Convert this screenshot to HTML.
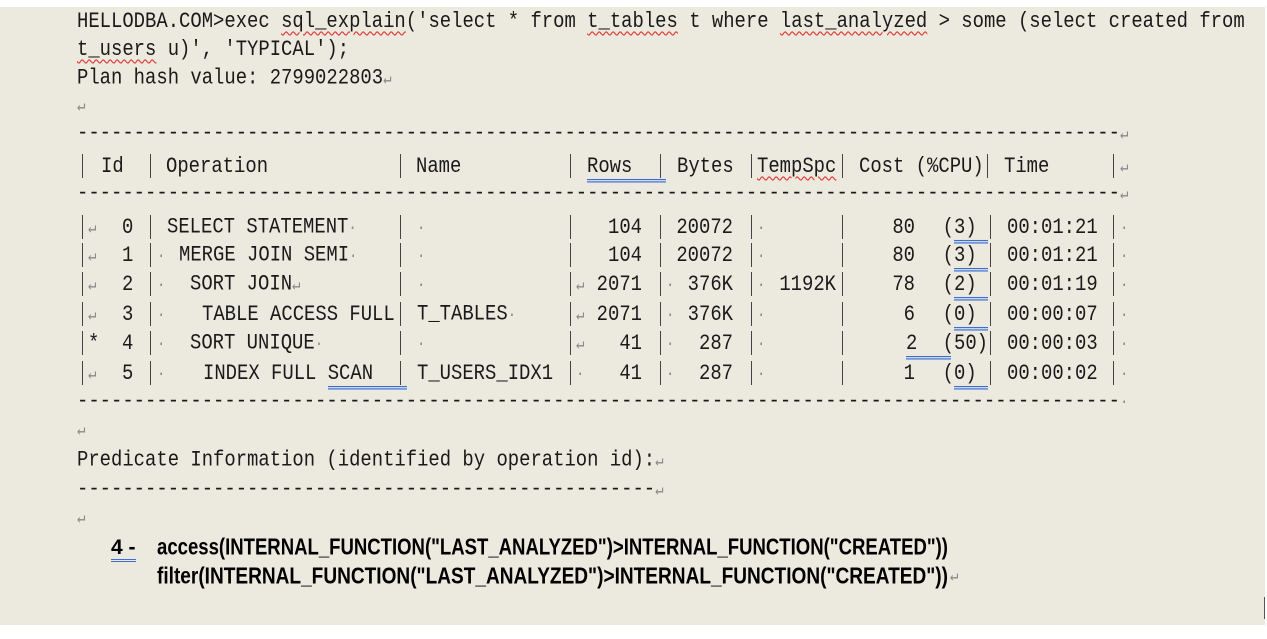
<!DOCTYPE html>
<html><head><meta charset="utf-8"><style>
html,body{margin:0;padding:0;background:#fff;width:1267px;height:639px;overflow:hidden}
#bg{position:absolute;left:0;top:7px;width:1265px;height:618px;background:#ece9df}
.s{position:absolute;white-space:pre;font-family:"Liberation Mono","DejaVu Sans Mono",monospace;font-size:18.9px;line-height:22px;color:#1a1a1a;transform:scaleY(1.18);transform-origin:0 50%}
.g{color:#8a8a8a;font-size:14px}
.b{position:absolute;white-space:pre;font-family:"Liberation Sans",sans-serif;font-weight:bold;font-size:21px;line-height:24px;color:#000;transform-origin:0 50%}
.w{text-decoration:underline wavy #e03030 1px;text-underline-offset:3px}
.u{border-bottom:3px double #3a6fd8}
.bar{position:absolute;width:1px;height:24px;background:#444}
.vb{position:absolute;width:1px;background:#555}
</style></head><body>
<div id="bg"></div>
<div class="s" style="left:77px;top:10px">HELLODBA.COM&gt;exec <span class="w">sql_explain</span>('select * from <span class="w">t_tables</span> t where <span class="w">last_analyzed</span> &gt; some (select created from</div>
<div class="s" style="left:77px;top:38px"><span class="w">t_users</span> u)', 'TYPICAL');</div>
<div class="s" style="left:77px;top:67px">Plan hash value: 2799022803<span class="g">↵</span></div>
<div class="s g" style="left:77px;top:96px">↵</div>
<div class="s" id="d1" style="left:77px;top:122px"></div>
<div class="s" id="d2" style="left:77px;top:182px"></div>
<div class="s" id="d3" style="left:77px;top:390px"></div>
<div id="tbl"></div>
<div class="s g" style="left:77px;top:420px">↵</div>
<div class="s" style="left:77px;top:449px">Predicate Information (identified by operation id):<span class="g">↵</span></div>
<div class="s" style="left:77px;top:478px">---------------------------------------------------<span class="g">↵</span></div>
<div class="s g" style="left:77px;top:508px">↵</div>
<div class="b" style="left:111px;top:536px"><span class="u">4 -</span></div>
<div class="b" id="f1" style="left:157px;top:536px">access(INTERNAL_FUNCTION("LAST_ANALYZED")&gt;INTERNAL_FUNCTION("CREATED"))</div>
<div class="b" id="f2" style="left:157px;top:565px">filter(INTERNAL_FUNCTION("LAST_ANALYZED")&gt;INTERNAL_FUNCTION("CREATED"))</div>
<div class="s g" style="left:950px;top:566px">↵</div>
<div class="vb" style="left:1264px;top:597px;height:22px"></div>
<script>
var dash=new Array(93).join("-");
document.getElementById("d1").innerHTML=dash+'<span class="g">↵</span>';
document.getElementById("d2").innerHTML=dash+'<span class="g">↵</span>';
document.getElementById("d3").innerHTML=dash+'<span class="g">·</span>';
var T=document.getElementById("tbl"),h="";
function t(x,y,s,right){h+='<div class="s" style="'+(right?'right:'+(1267-x)+'px':'left:'+x+'px')+';top:'+y+'px">'+s+'</div>';}
function bar(x,y){h+='<div class="bar" style="left:'+x+'px;top:'+(y-1)+'px"></div>';}
var G='<span class="g">↵</span>',D='<span class="g">·</span>';
// header
var hy=155;[82,150,400,570,751,842,987,1113].forEach(function(x){bar(x,hy)});
t(101,hy,"Id");t(166,hy,"Operation");t(416,hy,"Name");t(587,hy,'<span class="u">Rows&nbsp;&nbsp;&nbsp;</span>');bar(660,hy);
t(677,hy,"Bytes");t(757,hy,'<span class="w">TempSpc</span>');t(859,hy,"Cost (%CPU)");t(1004,hy,"Time");t(1120,hy,G);
var rows=[
[216,G,"0",167,"SELECT STATEMENT"+D,"","", "104","20072","","80",'(<span class="u">3)&nbsp;</span>',"00:01:21",0,0],
[244,G,"1",179,"MERGE JOIN SEMI"+D,"","", "104","20072","","80",'(<span class="u">3)&nbsp;</span>',"00:01:21",0,0],
[273,G,"2",190,"SORT JOIN"+G,"",G,"2071","376K","1192K","78",'(<span class="u">2)&nbsp;</span>',"00:01:19",1,0],
[303,G,"3",202,"TABLE ACCESS FULL","T_TABLES"+D,G,"2071","376K","","6",'(<span class="u">0)&nbsp;</span>',"00:00:07",1,0],
[332,"*","4",190,"SORT UNIQUE"+D,"",G,"41","287","","",'(50)',"00:00:03",1,1],
[362,G,"5",203,'INDEX FULL <span class="u">SCAN&nbsp;&nbsp;&nbsp;</span>',"T_USERS_IDX1",D,"41","287","","1",'(<span class="u">0)&nbsp;</span>',"00:00:02",1,0]];
rows.forEach(function(r){var y=r[0];
[82,150,400,570,660,751,842,990,1113].forEach(function(x){bar(x,y)});
t(88,y,r[1]);t(122,y,r[2]);if(r[0]!=216)t(157,y,D);t(r[3],y,r[4]);
t(417,y,r[5]||D);if(r[6])t(576,y,r[6]);
t(642,y,r[7],1);if(r[13])t(666,y,D);t(733,y,r[8],1);t(757,y,D);if(r[9])t(836,y,r[9],1);
if(r[14])t(906,y,'<span class="u">2&nbsp;&nbsp;&nbsp;</span>');else t(915,y,r[10],1);
t(988,y,r[11],1);t(1007,y,r[12]);t(1120,y,D);});
T.innerHTML=h;
[["f1",791],["f2",791]].forEach(function(a){var e=document.getElementById(a[0]);var w=e.getBoundingClientRect().width;if(w>0)e.style.transform="scaleX("+(a[1]/w)+") scaleY(1.12)";});
</script>
</body></html>
